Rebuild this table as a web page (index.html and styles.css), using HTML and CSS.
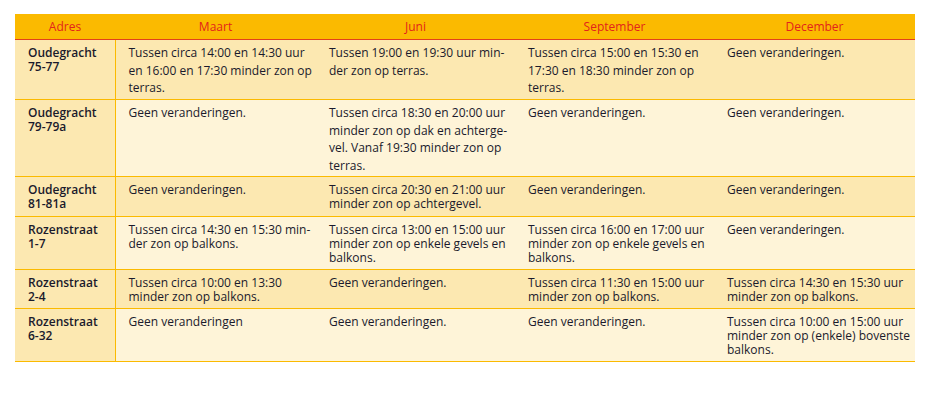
FILE: index.html
```html
<!DOCTYPE html>
<html lang="nl">
<head>
<meta charset="utf-8">
<title>Zonuren</title>
<link rel="stylesheet" href="styles.css">
</head>
<body>
<table class="sun">
  <colgroup>
    <col class="c-addr"><col class="c-m"><col class="c-j"><col class="c-s"><col class="c-d">
  </colgroup>
  <thead>
    <tr><th>Adres</th><th>Maart</th><th>Juni</th><th>September</th><th>December</th></tr>
  </thead>
  <tbody>
    <tr class="r1">
      <td class="addr">Oudegracht<br>75-77</td>
      <td class="loose">Tussen circa 14:00 en 14:30 uur<br>en 16:00 en 17:30 minder zon op<br>terras.</td>
      <td class="loose">Tussen 19:00 en 19:30 uur min-<br>der zon op terras.</td>
      <td class="loose">Tussen circa 15:00 en 15:30 en<br>17:30 en 18:30 minder zon op<br>terras.</td>
      <td>Geen veranderingen.</td>
    </tr>
    <tr class="r2">
      <td class="addr">Oudegracht<br>79-79a</td>
      <td>Geen veranderingen.</td>
      <td class="loose">Tussen circa 18:30 en 20:00 uur<br>minder zon op dak en achterge-<br>vel. Vanaf 19:30 minder zon op<br>terras.</td>
      <td>Geen veranderingen.</td>
      <td>Geen veranderingen.</td>
    </tr>
    <tr class="r3">
      <td class="addr">Oudegracht<br>81-81a</td>
      <td>Geen veranderingen.</td>
      <td>Tussen circa 20:30 en 21:00 uur<br>minder zon op achtergevel.</td>
      <td>Geen veranderingen.</td>
      <td>Geen veranderingen.</td>
    </tr>
    <tr class="r4">
      <td class="addr">Rozenstraat<br>1-7</td>
      <td>Tussen circa 14:30 en 15:30 min-<br>der zon op balkons.</td>
      <td>Tussen circa 13:00 en 15:00 uur<br>minder zon op enkele gevels en<br>balkons.</td>
      <td>Tussen circa 16:00 en 17:00 uur<br>minder zon op enkele gevels en<br>balkons.</td>
      <td>Geen veranderingen.</td>
    </tr>
    <tr class="r5">
      <td class="addr">Rozenstraat<br>2-4</td>
      <td>Tussen circa 10:00 en 13:30<br>minder zon op balkons.</td>
      <td>Geen veranderingen.</td>
      <td>Tussen circa 11:30 en 15:00 uur<br>minder zon op balkons.</td>
      <td>Tussen circa 14:30 en 15:30 uur<br>minder zon op balkons.</td>
    </tr>
    <tr class="r6">
      <td class="addr">Rozenstraat<br>6-32</td>
      <td>Geen veranderingen</td>
      <td>Geen veranderingen.</td>
      <td>Geen veranderingen.</td>
      <td>Tussen circa 10:00 en 15:00 uur<br>minder zon op (enkele) bovenste<br>balkons.</td>
    </tr>
  </tbody>
</table>
</body>
</html>
```
FILE: styles.css
```css
html, body {
  margin: 0;
  background: #ffffff;
}
body {
  padding: 14px 22px 0 15px;
  font-family: "Open Sans", "DejaVu Sans", sans-serif;
  font-size: 12px;
  color: #1a1a2c;
}
.sun {
  width: 900px;
  border-collapse: collapse;
  table-layout: fixed;
}
.c-addr { width: 100px; }
.c-m { width: 201px; }
.c-j { width: 199px; }
.c-s { width: 199px; }
.c-d { width: 201px; }
.sun th {
  background: #fbba00;
  color: #e3241b;
  font-weight: 400;
  height: 24px;
  padding: 1px 0 0;
  text-align: center;
  border-bottom: 1px solid #e3401b;
  line-height: 24px;
}
.sun td {
  vertical-align: top;
  text-align: left;
  padding: 6px 4px 0 13px;
  line-height: 14px;
  white-space: nowrap;
  border-bottom: 1px solid #fbba00;
}
.sun td.loose {
  line-height: 17.5px;
  padding-top: 4px;
}
.sun td.addr {
  background: #fce8b1;
  font-weight: 600;
  border-right: 1px solid #fbba00;
}
.r1, .r3, .r5 { background: #fce8b1; }
.r2, .r4, .r6 { background: #fef4d8; }
.r1 { height: 60px; }
.r2 { height: 77px; }
.r3 { height: 40px; }
.r4 { height: 53px; }
.r5 { height: 39px; }
.r6 { height: 53px; }
```
